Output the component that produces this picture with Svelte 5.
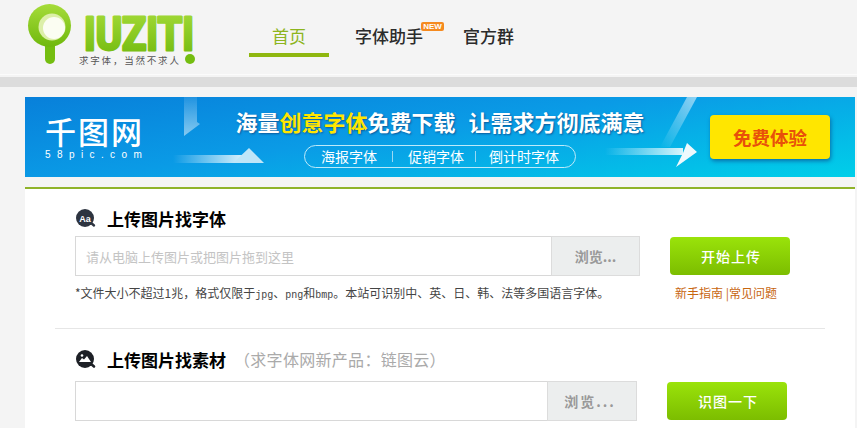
<script>
const tags = ['海报字体', '促销字体', '倒计时字体']
</script>

<header class="top">
    <a class="logo" href="#home" aria-label="qiuziti">
        <svg width="175" height="72" viewBox="0 0 175 72">
            <defs>
                <linearGradient id="lg" x1="0" y1="0" x2="0" y2="1">
                    <stop offset="0" stop-color="#a6dc3a"/>
                    <stop offset="1" stop-color="#6fb80c"/>
                </linearGradient>
            </defs>
            <rect x="20" y="40" width="10" height="24" rx="5" fill="#74bd10"/>
            <circle cx="24.500" cy="25.500" r="21.500" fill="url(#lg)"/>
            <circle cx="27" cy="27" r="13.500" fill="#dcefa8"/>
            <circle cx="29" cy="28" r="11" fill="#fbfdf2"/>
            <text class="word" x="59" y="50" textLength="110" lengthAdjust="spacingAndGlyphs" fill="url(#lg)" stroke="url(#lg)">IUZITI</text>
            <circle cx="165" cy="59" r="5" fill="#74bd10"/>
            <text class="slogan" x="54" y="64">求字体，当然不求人</text>
        </svg>
    </a>
    <nav>
        <a class="on" href="#home">首页</a>
        <a class="helper" href="#helper">字体助手<span class="new">NEW</span></a>
        <a href="#group">官方群</a>
    </nav>
</header>
<div class="band"></div>

<main>
    <div class="banner">
        <svg class="decor" width="830" height="80" viewBox="0 0 830 80" aria-hidden="true">
            <defs>
                <linearGradient id="down" x1="0" y1="0" x2="0" y2="1">
                    <stop offset="0" stop-color="#fff" stop-opacity=".1"/>
                    <stop offset="1" stop-color="#fff" stop-opacity=".5"/>
                </linearGradient>
                <linearGradient id="right" x1="0" y1="0" x2="1" y2="0">
                    <stop offset="0" stop-color="#fff" stop-opacity="0"/>
                    <stop offset="1" stop-color="#fff" stop-opacity=".85"/>
                </linearGradient>
                <linearGradient id="slash" x1="1" y1="0" x2="0" y2="1">
                    <stop offset="0" stop-color="#fff" stop-opacity=".55"/>
                    <stop offset="1" stop-color="#fff" stop-opacity="0"/>
                </linearGradient>
            </defs>
            <polygon points="159,0 172,0 172,25 175,27 159,39" fill="url(#down)"/>
            <rect x="148" y="58" width="70" height="8" fill="url(#right)"/>
            <polygon points="208,66 239,66 224,51" fill="#bfe6f8"/>
            <polygon points="662,0 672,0 645,50 635,50" fill="url(#slash)"/>
            <rect x="580" y="51" width="78" height="7" fill="url(#right)"/>
            <polygon points="662,46 672,55 651,70 658,56" fill="#eef9fd"/>
        </svg>
        <div class="brand">
            <strong>千图网</strong>
            <span>58pic.com</span>
        </div>
        <div class="pitch">
            <h2>海量<em>创意字体</em>免费下载<i></i>让需求方彻底满意</h2>
            <p>
                {#each tags as tag, i}
                    {#if i > 0}<b></b>{/if}
                    <span>{tag}</span>
                {/each}
            </p>
        </div>
        <a class="try" href="#try">免费体验</a>
    </div>

    <div class="card">
        <section class="find first">
            <h3>
                <svg width="22" height="20" viewBox="0 0 22 20" aria-hidden="true">
                    <path d="M15 14l4 3.5" stroke="#2d3440" stroke-width="2.4" stroke-linecap="round"/>
                    <circle cx="10" cy="10" r="9" fill="#2d3440"/>
                    <text class="aa" x="10" y="13.5">Aa</text>
                </svg>
                上传图片找字体
            </h3>
            <div class="row">
                <div class="pick">
                    <input type="text" placeholder="请从电脑上传图片或把图片拖到这里" />
                    <button class="browse">浏览...</button>
                </div>
                <button class="go">开始上传</button>
            </div>
            <div class="foot">
                <p class="note">*文件大小不超过1兆，格式仅限于<span>jpg</span>、<span>png</span>和<span>bmp</span>。本站可识别中、英、日、韩、法等多国语言字体。</p>
                <p class="links"><a href="#guide">新手指南</a> |<a href="#faq">常见问题</a></p>
            </div>
        </section>

        <section class="find second">
            <h3>
                <svg width="22" height="20" viewBox="0 0 22 20" aria-hidden="true">
                    <path d="M15 14l4 3.5" stroke="#1d2026" stroke-width="2.6" stroke-linecap="round"/>
                    <circle cx="10" cy="10" r="9" fill="#1d2026"/>
                    <path d="M4 13l3-4 2 1.5 3-3.500 4 6z" fill="#fff"/>
                    <circle cx="7" cy="6.500" r="1.300" fill="#fff"/>
                </svg>
                上传图片找素材<small>（求字体网新产品：链图云）</small>
            </h3>
            <div class="row">
                <div class="pick">
                    <input type="text" />
                    <button class="browse wide">浏览...</button>
                </div>
                <button class="go">识图一下</button>
            </div>
        </section>
    </div>
</main>

<style>
    :global(body){
        background:#f4f4f4;
        font-family:"Noto Sans CJK SC", "Liberation Sans", sans-serif;
        overflow:hidden;
    }
    a{
        text-decoration:none;
    }
    .top{
        display:flex;
        height:74px;
        padding-left:25px;
        gap:49px;
        border-bottom:1px solid #fbfbfb;
    }
    .logo{
        display:block;
        height:72px;
    }
    .word{
        font-family:Roboto, sans-serif;
        font-weight:700;
        font-size:46px;
        stroke-width:3px;
        stroke-linejoin:round;
    }
    .slogan{
        font-size:9.5px;
        letter-spacing:1.8px;
        fill:#555;
    }
    nav{
        display:flex;
        gap:26px;
        height:57px;
    }
    nav a{
        position:relative;
        display:flex;
        align-items:center;
        height:53px;
        padding-top:19px;
        box-sizing:border-box;
        color:#2b2b2b;
        font-size:17px;
        font-weight:500;
        line-height:32px;
    }
    nav .on{
        justify-content:center;
        width:80px;
        height:57px;
        color:#8db51e;
        font-weight:400;
        border-bottom:4px solid #8fb70f;
    }
    .helper{
        padding-right:14px;
    }
    .new{
        position:absolute;
        left:66px;
        top:22px;
        width:23px;
        height:9px;
        border-radius:2px;
        background:#f58a1f;
        color:#fff;
        font:700 8px/9px "Liberation Sans", sans-serif;
        text-align:center;
    }
    .band{
        height:10px;
        margin-top:2px;
        background:#dcdcdc;
    }
    main{
        margin:10px 2px 0 25px;
    }
    .banner{
        position:relative;
        display:flex;
        align-items:center;
        height:80px;
        padding-left:20px;
        background:linear-gradient(172deg, #0880da 0%, #0a9be6 45%, #00cfe9 100%);
        color:#fff;
    }
    .decor{
        position:absolute;
        left:0;
        top:0;
    }
    .brand{
        position:relative;
        display:flex;
        flex-direction:column;
        width:100px;
    }
    .brand strong{
        font-size:31px;
        font-weight:500;
        line-height:34px;
        letter-spacing:2px;
    }
    .brand span{
        margin-top:1px;
        font:10px/12px "Liberation Sans", sans-serif;
        letter-spacing:6.400px;
        white-space:nowrap;
    }
    .pitch{
        position:relative;
        display:flex;
        flex-direction:column;
        align-items:center;
        width:408px;
        margin-left:91px;
    }
    h2{
        display:flex;
        margin:0;
        font-size:22px;
        font-weight:700;
        line-height:30px;
        white-space:nowrap;
        text-shadow:1px 1px 2px #0a5a9c;
    }
    h2 em{
        font-style:normal;
        color:#ffe600;
    }
    h2 i{
        width:13px;
    }
    .pitch p{
        display:flex;
        align-items:center;
        height:23px;
        box-sizing:border-box;
        margin:9px 0 0;
        padding:0 16px;
        border:1px solid #bdeafa;
        border-radius:12px;
        font-size:14px;
        line-height:21px;
        white-space:nowrap;
    }
    .pitch p b{
        width:1px;
        height:11px;
        margin:0 15px;
        background:#9ad9f3;
    }
    .pitch p b:last-of-type{
        margin:0 13px 0 11px;
    }
    .try{
        position:relative;
        display:block;
        width:120px;
        height:44px;
        margin-left:66px;
        border-radius:4px;
        background:#ffe600;
        box-shadow:1px 2px 4px #0a6ea8;
        color:#e8500a;
        font-size:18.5px;
        font-weight:700;
        line-height:44px;
        text-align:center;
    }
    .card{
        margin-top:10px;
        height:241px;
        padding:0 30px;
        border-top:2px solid #8fb32a;
        background:#fff;
    }
    .find{
        padding:0 20px;
    }
    .first{
        height:139px;
        border-bottom:1px solid #e6e6e6;
    }
    h3{
        display:flex;
        align-items:center;
        height:24px;
        margin:0;
        color:#000;
        font-size:17px;
        font-weight:700;
        white-space:nowrap;
    }
    h3 svg{
        margin-right:10px;
    }
    .first h3{
        padding-top:17px;
    }
    .second h3{
        padding-top:18px;
    }
    h3 small{
        margin-left:8px;
        color:#aaa;
        font-size:16px;
        font-weight:400;
        letter-spacing:.3px;
    }
    .aa{
        fill:#fff;
        font:700 9px "Liberation Sans", sans-serif;
        text-anchor:middle;
    }
    .row{
        display:flex;
        align-items:center;
        gap:30px;
    }
    .first .row{
        margin-top:6px;
    }
    .second .row{
        margin-top:10px;
    }
    .pick{
        display:flex;
        width:565px;
        height:40px;
    }
    .second .pick{
        width:562px;
    }
    input{
        flex:1;
        min-width:0;
        box-sizing:border-box;
        height:40px;
        padding:0 10px;
        border:1px solid #d8d8d8;
        border-right:none;
        outline:none;
        background:#fff;
        font:13px "Noto Sans CJK SC", sans-serif;
    }
    input::placeholder{
        color:#c4c4c4;
    }
    .browse{
        width:89px;
        height:40px;
        padding:0;
        border:1px solid #dcdcdc;
        background:#eceeee;
        color:#999;
        font:700 14px "Noto Sans CJK SC", sans-serif;
    }
    .wide{
        width:90px;
        padding-right:4px;
        letter-spacing:2px;
    }
    .go{
        width:120px;
        height:38px;
        padding:0 0 0 2px;
        border:none;
        border-radius:4px;
        background:linear-gradient(#9ae30a, #7cbd00);
        color:#fff;
        font:500 14px "Noto Sans CJK SC", sans-serif;
        letter-spacing:1px;
    }
    .foot{
        display:flex;
        margin-top:8px;
    }
    .note{
        margin:0;
        width:600px;
        color:#444;
        font-size:12px;
        line-height:18px;
        white-space:nowrap;
    }
    .note span{
        font-family:"Liberation Mono", monospace;
        font-size:10px;
    }
    .links{
        margin:0;
        color:#c8660f;
        font-size:12px;
        line-height:18px;
        white-space:nowrap;
    }
    .links a{
        color:#c8660f;
    }
</style>
